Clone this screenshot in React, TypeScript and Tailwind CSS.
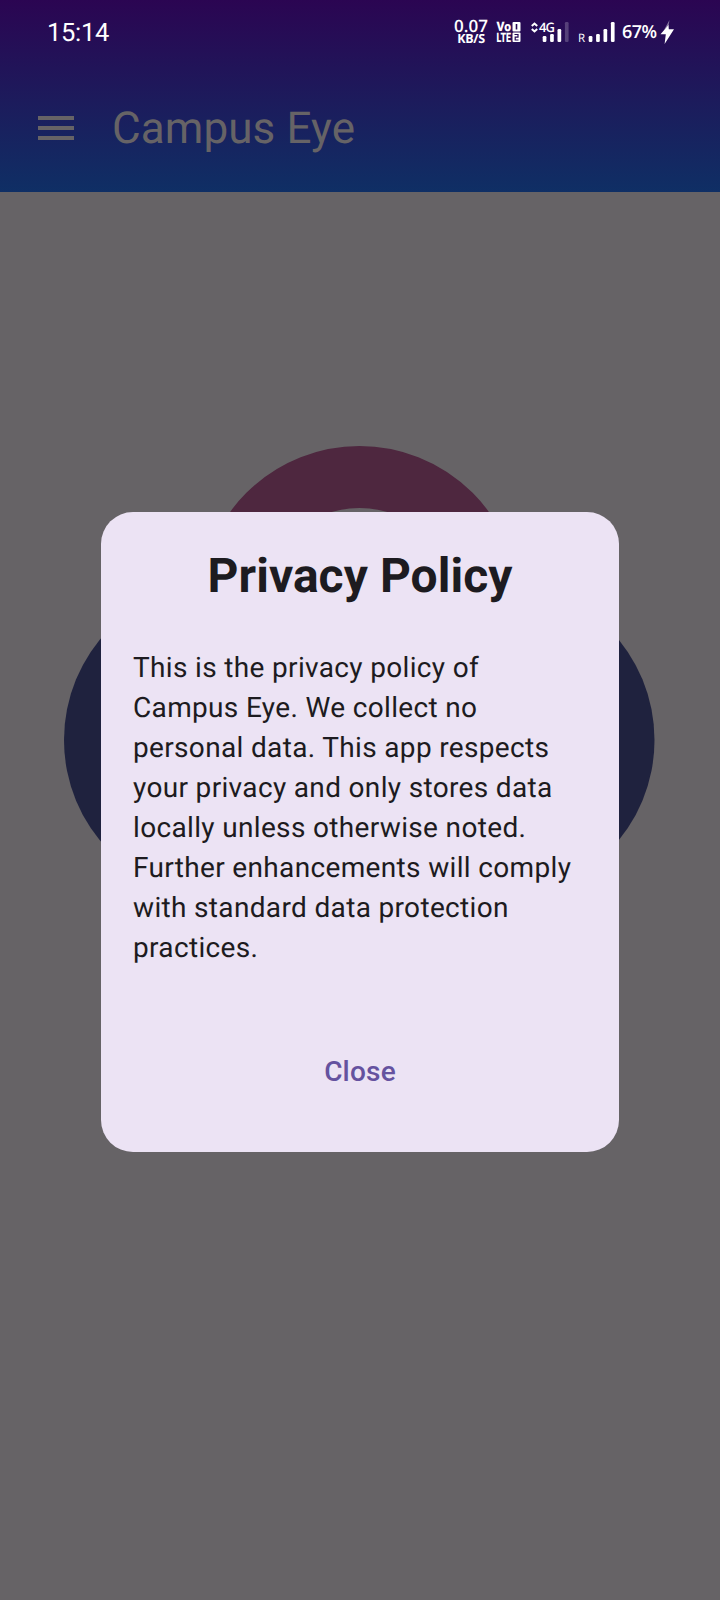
import React from "react";

function Bars({ heights, dim }: { heights: number[]; dim?: boolean }) {
  return (
    <svg className="h-[21px] w-[28px]" viewBox="0 0 28 21" fill="#fff">
      {heights.map((h, i) => (
        <rect key={i} x={0.7 + i * 7.4} y={21 - h} width="3.7" height={h} rx="1.2" opacity={dim && i === 3 ? 0.22 : 1} />
      ))}
    </svg>
  );
}

function StatusBar() {
  return (
    <div className="flex h-[64px] items-start text-white">
      <div className="ml-[47px] mt-[17px] w-[80px] font-['Roboto'] text-[25.5px] leading-[32px] tracking-[-0.3px]">15:14</div>
      <div className="ml-[327px] mt-[18px] w-[34px] text-center font-['Open_Sans'] font-semibold">
        <div className="-mx-2 text-[17px] leading-[16px]">0.07</div>
        <div className="-mx-2 text-[12.5px] leading-[10px] font-bold tracking-[-0.3px]">KB/S</div>
      </div>
      <svg className="ml-[8px] mt-[21px] h-[22px] w-[26px] overflow-visible" viewBox="0 0 26 22" fill="#fff">
        <text x="0.5" y="10" fontFamily="Roboto" fontSize="13" fontWeight="900" textLength="14.5" lengthAdjust="spacingAndGlyphs">Vo</text>
        <text x="0.5" y="21" fontFamily="Roboto" fontSize="13" fontWeight="900" textLength="14.5" lengthAdjust="spacingAndGlyphs">LTE</text>
        <rect x="16.5" y="1" width="8" height="9.5" rx="1" />
        <rect x="16.5" y="11.5" width="8" height="9.5" rx="1" />
        <path d="M20.5 3v5.5" stroke="#270852" strokeWidth="1.6" />
        <path d="M18.5 13.5h3.5v2.7h-2.8v2.8h3.3" fill="none" stroke="#250a54" strokeWidth="1.2" />
      </svg>
      <div className="relative ml-[9px] mt-[21px] h-[22px] w-[39px]">
        <svg className="absolute left-0 top-[1px] h-[11px] w-[7px]" viewBox="0 0 7 11" fill="none" stroke="#fff" strokeWidth="2">
          <path d="M.8 4 3.5 1.5 6.2 4M.8 7 3.5 9.5 6.2 7" />
        </svg>
        <div className="absolute left-[8px] top-[-1px] font-['Open_Sans'] text-[13px] leading-[15px] font-semibold tracking-[-0.9px]">4G</div>
        <div className="absolute left-[11px] top-0"><Bars heights={[6, 8, 13, 20]} dim /></div>
      </div>
      <div className="ml-[8px] mt-[32px] w-[10px] font-['Open_Sans'] text-[11.5px] leading-[14px]">R</div>
      <div className="mt-[21px]"><Bars heights={[6, 8, 13, 20]} /></div>
      <div className="ml-[6px] mt-[20px] w-[38px] font-['Open_Sans'] text-[18px] leading-[24px] font-semibold tracking-[-0.6px]">67%</div>
      <svg className="mt-[20px] h-[24px] w-[14px]" viewBox="0 0 14 24" fill="#fff">
        <path d="M9.5 0 8.5 6 4 10z" opacity=".45" />
        <path d="M8.5 5 0.5 14.3h5.3L4.6 24 14 9.2H8.8z" />
      </svg>
    </div>
  );
}

export default function App() {
  return (
    <div className="relative flex h-[1600px] w-[720px] flex-col overflow-hidden bg-[#666366] font-[Roboto,sans-serif] [text-rendering:geometricPrecision]">
      <header className="h-[192px] bg-linear-to-b/srgb from-[#2b0552] to-[#0f2f65]">
        <StatusBar />
        <div className="flex h-[128px] items-center text-[#666366]">
          <svg className="ml-[38px] h-[24px] w-[36px]" viewBox="0 0 36 24" fill="currentColor">
            <path d="M0 0h36v4H0zM0 10h36v4H0zM0 20h36v4H0z" />
          </svg>
          <h1 className="ml-[38px] text-[44px] leading-[56px] tracking-[0.1px]">Campus Eye</h1>
        </div>
      </header>
      <main className="relative flex-1">
        <svg className="absolute inset-0" width="720" height="1408" viewBox="0 192 720 1408">
          <circle cx="222.5" cy="740" r="158.5" fill="#1f223e" />
          <circle cx="496" cy="740" r="158.5" fill="#1f223e" />
          <circle cx="359.5" cy="606" r="129" fill="none" stroke="#4e273f" strokeWidth="62" />
        </svg>
        <section role="dialog" className="relative mx-auto mt-[320px] flex h-[640px] w-[518px] flex-col rounded-[32px] bg-[#ece3f4] px-8 text-[#1d1b20]">
          <h2 className="mt-[32px] text-center text-[48px] leading-[64px] font-bold tracking-[0.05px]">Privacy Policy</h2>
          <p className="mt-[40px] text-[28px] leading-[40px] tracking-[0.34px] whitespace-nowrap">
            This is the privacy policy of<br />Campus Eye. We collect no<br />personal data. This app respects<br />your privacy and only stores data<br />locally unless otherwise noted.<br />Further enhancements will comply<br />with standard data protection<br />practices.
          </p>
          <button className="mx-auto mt-[84px] text-[28px] leading-[40px] font-medium tracking-[0.2px] text-[#65529f]">Close</button>
        </section>
      </main>
    </div>
  );
}
